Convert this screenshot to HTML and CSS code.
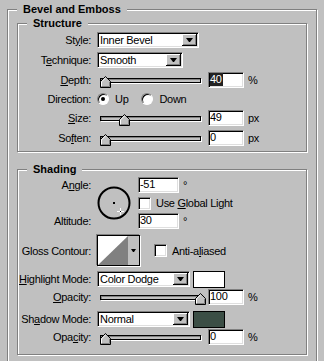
FILE: index.html
```html
<!DOCTYPE html>
<html lang="en">
<head>
    <meta charset="UTF-8">
    <title>Bevel and Emboss</title>
    <link rel="stylesheet" href="styles.css">
</head>
<body>
    <div class="group outer">
        <div class="group-title">Bevel and Emboss</div>

        <!-- Structure -->
        <div class="group structure">
            <div class="group-title">Structure</div>

            <div class="row">
                <span class="label">St<u>y</u>le:</span>
                <div class="select style-select"><span class="value">Inner Bevel</span><span class="arrow"></span></div>
            </div>
            <div class="row">
                <span class="label">T<u>e</u>chnique:</span>
                <div class="select technique-select"><span class="value">Smooth</span><span class="arrow"></span></div>
            </div>
            <div class="row">
                <span class="label"><u>D</u>epth:</span>
                <div class="slider"><div class="track"></div><span class="thumb" style="left: 3px"></span></div>
                <div class="field"><span class="selected">40</span></div>
                <span class="unit">%</span>
            </div>
            <div class="row short">
                <span class="label">Direction:</span>
                <span class="radio checked"></span><span class="radio-text">Up</span>
                <span class="radio"></span><span class="radio-text">Down</span>
            </div>
            <div class="row">
                <span class="label"><u>S</u>ize:</span>
                <div class="slider"><div class="track"></div><span class="thumb" style="left: 22px"></span></div>
                <div class="field">49</div>
                <span class="unit">px</span>
            </div>
            <div class="row">
                <span class="label">So<u>f</u>ten:</span>
                <div class="slider"><div class="track"></div><span class="thumb" style="left: 3px"></span></div>
                <div class="field">0</div>
                <span class="unit">px</span>
            </div>
        </div>

        <!-- Shading -->
        <div class="group shading">
            <div class="group-title">Shading</div>

            <div class="angle-block">
                <span class="label angle-label">A<u>n</u>gle:</span>
                <span class="label altitude-label">Altitude:</span>
                <div class="dial">
                    <svg width="34" height="34" viewBox="0 0 34 34">
                        <circle cx="17" cy="17" r="15.5" fill="none" stroke="#000" stroke-width="2"/>
                        <rect x="16" y="16" width="2" height="2" fill="#000"/>
                        <path d="M20 25.5h7M23.5 22v7" stroke="#fff" stroke-width="1"/>
                        <rect x="23" y="25" width="1" height="1" fill="#000"/>
                    </svg>
                </div>
                <div class="angle-row">
                    <div class="field angle-field">-51</div>
                    <span class="unit">°</span>
                </div>
                <div class="angle-row">
                    <span class="checkbox"></span><span class="check-text">Use <u>G</u>lobal Light</span>
                </div>
                <div class="angle-row">
                    <div class="field angle-field">30</div>
                    <span class="unit">°</span>
                </div>
            </div>

            <div class="row contour-row">
                <span class="label">Gloss Contour:</span>
                <div class="contour">
                    <svg width="30" height="29" viewBox="0 0 30 29">
                        <rect width="30" height="29" fill="#fff"/>
                        <polygon points="0,29 30,0 30,29" fill="#808080"/>
                    </svg>
                    <span class="contour-arrow"></span>
                </div>
                <span class="checkbox anti"></span><span class="check-text">Anti-a<u>l</u>iased</span>
            </div>

            <div class="row short">
                <span class="label"><u>H</u>ighlight Mode:</span>
                <div class="select mode-select"><span class="value">Color Dodge</span><span class="arrow"></span></div>
                <span class="swatch"></span>
            </div>
            <div class="row short">
                <span class="label"><u>O</u>pacity:</span>
                <div class="slider"><div class="track"></div><span class="thumb" style="left: 98px"></span></div>
                <div class="field">100</div>
                <span class="unit">%</span>
            </div>
            <div class="row short gap">
                <span class="label">Sh<u>a</u>dow Mode:</span>
                <div class="select mode-select"><span class="value">Normal</span><span class="arrow"></span></div>
                <span class="swatch dark"></span>
            </div>
            <div class="row short">
                <span class="label">Opa<u>c</u>ity:</span>
                <div class="slider"><div class="track"></div><span class="thumb" style="left: 3px"></span></div>
                <div class="field">0</div>
                <span class="unit">%</span>
            </div>
        </div>
    </div>
</body>
</html>
```

FILE: styles.css
```css
* {
    box-sizing: border-box;
}

body {
    margin: 0;
    height: 361px;
    overflow: hidden;
    background-color: #c0c0c0;
    font-family: "Liberation Sans", Arial, sans-serif;
    font-size: 11px;
    letter-spacing: -0.3px;
    color: #000;
}

/* Etched group boxes */
.group {
    position: relative;
    border: 1px solid #808080;
    box-shadow: inset 1px 1px 0 #fff, 1px 1px 0 #fff;
}

.group-title {
    position: absolute;
    top: -7px;
    left: 9px;
    padding: 0 6px;
    line-height: 13px;
    font-weight: bold;
    letter-spacing: 0;
    background-color: #c0c0c0;
}

.outer {
    margin: 9px 7px 0;
    padding: 13px 9px 30px;
}

.structure {
    padding: 6px 0 3px;
}

.shading {
    margin-top: 17px;
    padding: 6px 0 8px;
}

/* Rows */
.row {
    display: flex;
    align-items: center;
    height: 20px;
}

.row.short {
    height: 18px;
}

.row.gap {
    margin-top: 4px;
}

.label {
    width: 73px;
    margin-right: 6px;
    flex-shrink: 0;
    text-align: right;
    white-space: nowrap;
}

/* Sunken white fields */
.select,
.field,
.checkbox {
    background-color: #fff;
    border: 1px solid;
    border-color: #808080 #fff #fff #808080;
    box-shadow: inset 1px 1px 0 #000, inset -1px -1px 0 #dfdfdf;
}

.select {
    display: flex;
    height: 16px;
    padding: 1px;
}

.select .value {
    flex: 1;
    padding-left: 1px;
    line-height: 12px;
    white-space: nowrap;
}

.style-select { width: 102px; }
.technique-select { width: 86px; }
.mode-select { width: 93px; }

.arrow {
    width: 15px;
    height: 12px;
    display: flex;
    align-items: center;
    justify-content: center;
    background-color: #c0c0c0;
    box-shadow: inset -1px -1px 0 #000, inset 1px 1px 0 #fff, inset -2px -2px 0 #808080;
}

.arrow::after {
    content: "";
    width: 1px;
    border-left: 3px solid transparent;
    border-right: 3px solid transparent;
    border-top: 4px solid #000;
    margin-right: 1px;
}

.field {
    width: 36px;
    height: 16px;
    padding-left: 1px;
    line-height: 13px;
    margin-left: 5px;
}

.field .selected {
    display: inline-block;
    background-color: #222;
    color: #fff;
    line-height: 13px;
    padding-right: 1px;
}

.unit {
    margin-left: 4px;
}

/* Sliders */
.slider {
    position: relative;
    width: 106px;
    height: 12px;
    margin-top: 4px;
}

.track {
    margin: 2px 0 0 3px;
    width: 101px;
    height: 5px;
    border: 1px solid #000;
    background-color: #c0c0c0;
    box-shadow: inset 1px 1px 0 #808080, 1px 1px 0 #fff;
}

.thumb {
    position: absolute;
    top: 0;
    width: 11px;
    height: 12px;
    background: url("data:image/svg+xml,%3Csvg xmlns='http://www.w3.org/2000/svg' width='11' height='12'%3E%3Cpolygon points='0.5,11.5 0.5,5.5 5.5,0.5 10.5,5.5 10.5,11.5' fill='%23c0c0c0' stroke='%23000'/%3E%3Cpolyline points='1.5,10.5 1.5,5.9 5.5,1.9' fill='none' stroke='%23fff'/%3E%3Cpolyline points='9.5,5.9 9.5,10.5 1.5,10.5' fill='none' stroke='%23808080'/%3E%3C/svg%3E") no-repeat;
}

/* Radio buttons */
.radio {
    position: relative;
    width: 12px;
    height: 12px;
    border-radius: 50%;
    background-color: #fff;
    border: 1px solid;
    border-color: #808080 #fff #fff #808080;
    box-shadow: inset 1px 1px 0 #000;
    flex-shrink: 0;
}

.radio.checked::after {
    content: "";
    position: absolute;
    left: 3px;
    top: 3px;
    width: 4px;
    height: 4px;
    border-radius: 50%;
    background-color: #000;
}

.radio-text {
    margin-left: 6px;
    margin-right: 13px;
}

/* Angle block */
.angle-block {
    display: grid;
    grid-template-columns: 79px 41px auto;
    grid-template-rows: 18px 18px 18px;
}

.angle-label {
    grid-column: 1;
    grid-row: 1;
    align-self: center;
}

.altitude-label {
    grid-column: 1;
    grid-row: 3;
    align-self: center;
}

.dial {
    grid-column: 2;
    grid-row: 1 / 4;
    align-self: center;
    height: 34px;
}

.dial svg {
    display: block;
}

.angle-row {
    grid-column: 3;
    display: flex;
    align-items: center;
}

.angle-field {
    width: 41px;
    margin-left: 0;
}

.checkbox {
    width: 13px;
    height: 13px;
    flex-shrink: 0;
}

.check-text {
    margin-left: 5px;
    white-space: nowrap;
}

/* Gloss contour */
.contour-row {
    height: 31px;
    margin-top: 5px;
    margin-bottom: 4px;
}

.contour {
    display: flex;
    width: 43px;
    height: 31px;
    border: 1px solid #000;
    box-shadow: -1px -1px 0 #808080, 1px 1px 0 #fff;
    background-color: #c0c0c0;
}

.contour svg {
    display: block;
}

.contour-arrow {
    flex: 1;
    display: flex;
    align-items: center;
    justify-content: center;
}

.contour-arrow::after {
    content: "";
    width: 1px;
    border-left: 2px solid transparent;
    border-right: 2px solid transparent;
    border-top: 3px solid #000;
    margin-bottom: 1px;
}

.checkbox.anti {
    margin-left: 14px;
}

/* Colour swatches */
.swatch {
    width: 32px;
    height: 17px;
    margin-left: 3px;
    border: 1px solid #000;
    background-color: #fff;
}

.swatch.dark {
    background-color: #3b4e45;
}
```
